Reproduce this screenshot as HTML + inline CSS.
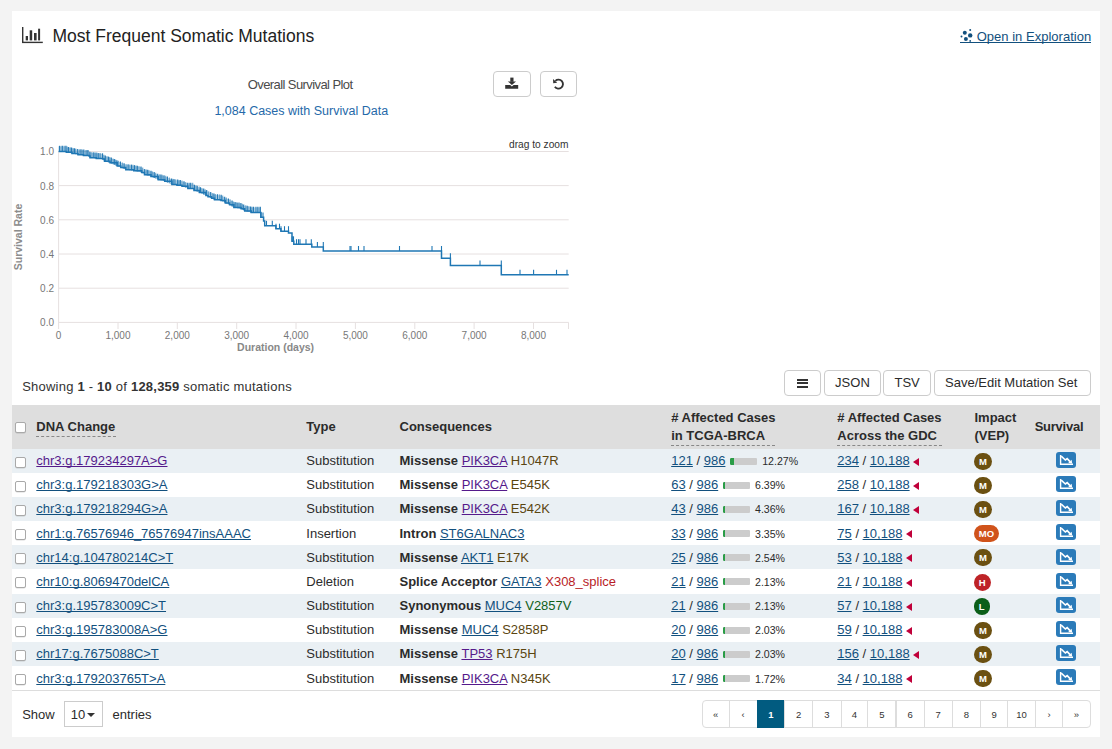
<!DOCTYPE html><html><head><meta charset="utf-8"><style>
*{margin:0;padding:0;box-sizing:border-box}
html,body{width:1112px;height:749px;overflow:hidden;background:#f3f3f3;font-family:"Liberation Sans",sans-serif;color:#2b2b2b}
.panel{position:absolute;left:12px;top:11px;width:1088px;height:726px;background:#fff}
.t{position:absolute;white-space:nowrap}
.b{font-weight:bold}
a,.lk{color:#12507e;text-decoration:underline;text-underline-offset:0.9px;text-decoration-thickness:1px;text-decoration-skip-ink:none}
.vis{color:#551a8b}
.btn{position:absolute;border:1px solid #ccc;border-radius:4px;background:#fff}
.row{position:absolute;left:12px;width:1088px}
.cb{position:absolute;width:11px;height:11px;border:1px solid #a9a9a9;border-radius:2px;background:#fff;box-shadow:0 0.5px 0.5px rgba(0,0,0,.15)}
.bar{position:absolute;width:27px;height:7px;border-radius:1px;background:#ccc;overflow:hidden}
.bar i{position:absolute;left:0;top:0;height:7px;background:#2a9d47;border-radius:1px 0 0 1px}
.pct{font-size:11px}
.badge{position:absolute;height:17px;border-radius:9px;color:#fff;font-weight:bold;font-size:9.5px;line-height:17px;text-align:center}
.sv{position:absolute;width:20px;height:16px;border-radius:3px;background:#2b7bb9}
.tri{position:absolute;width:0;height:0;border-top:4.3px solid transparent;border-bottom:4.3px solid transparent;border-right:6px solid #c0003a}
.pg{position:absolute;top:700px;height:28px;border:1px solid #ddd;font-size:9.5px;line-height:28px;text-align:center;color:#333;background:#fff}
</style></head><body>
<div class="panel"></div>
<svg style="position:absolute;left:21px;top:26px" width="24" height="18" viewBox="0 0 24 18">
<rect x="1" y="1" width="1.4" height="16" fill="#333"/>
<rect x="1" y="15.7" width="20.8" height="1.4" fill="#333"/>
<rect x="4.7" y="10" width="2.3" height="4.4" fill="#333"/>
<rect x="8.7" y="4.3" width="2.5" height="10.1" fill="#333"/>
<rect x="13" y="7" width="2.6" height="7.4" fill="#333"/>
<rect x="17.1" y="2.7" width="2" height="11.7" fill="#333"/>
</svg>
<div class="t " style="left:52.5px;top:28.39px;font-size:17.5px;line-height:17.5px;color:#222">Most Frequent Somatic Mutations</div>
<svg style="position:absolute;left:960px;top:28px" width="14" height="15" viewBox="0 0 14 15">
<circle cx="4.8" cy="4.8" r="2" fill="#12507e"/><circle cx="10.2" cy="1.9" r="1" fill="#12507e"/>
<circle cx="10.2" cy="7.4" r="2.2" fill="#12507e"/><circle cx="1.5" cy="8.4" r="1" fill="#12507e"/>
<circle cx="5.9" cy="11.1" r="2" fill="#12507e"/><circle cx="10.2" cy="12.9" r="0.9" fill="#12507e"/>
</svg>
<div style="position:absolute;left:960px;top:41.5px;width:130.5px;height:1px;background:#12507e"></div>
<div class="t " style="left:976.7px;top:30.00px;font-size:13px;line-height:13px;color:#12507e;letter-spacing:0.02px">Open in Exploration</div>
<div class="t " style="left:247.7px;top:77.70px;font-size:13px;line-height:13px;color:#4a4a4a;letter-spacing:-0.58px">Overall Survival Plot</div>
<div class="t " style="left:214.4px;top:104.62px;font-size:12.5px;line-height:12.5px;color:#2569a9">1,084 Cases with Survival Data</div>
<div class="btn" style="left:493px;top:71px;width:37.5px;height:26px"></div>
<div class="btn" style="left:540px;top:71px;width:37px;height:26px"></div>
<svg style="position:absolute;left:505px;top:77px" width="14" height="12" viewBox="0 0 14 12">
<rect x="5.3" y="0.6" width="3.2" height="4.2" fill="#333"/>
<path d="M2.8 4.4 H11 L6.9 8 Z" fill="#333"/>
<path d="M0.2 8 H5.2 L6.9 9.4 L8.6 8 H13.2 V11.8 H0.2 Z" fill="#333"/>
</svg>
<svg style="position:absolute;left:551px;top:76px" width="16" height="16" viewBox="0 0 16 16">
<g transform="translate(7.8 7.9) scale(0.9) translate(-8 -8)">
<path d="M4.2 4.6 A5 5 0 1 1 3.6 11.2" fill="none" stroke="#333" stroke-width="2.1"/>
<path d="M1.6 2.6 L6.2 6.8 L1.8 7.4 Z" fill="#333"/></g>
</svg>
<svg style="position:absolute;left:0;top:0" width="1112" height="749" viewBox="0 0 1112 749">
<line x1="59" x2="568.7" y1="151.5" y2="151.5" stroke="#e6e0e0" stroke-width="1"/>
<line x1="59" x2="568.7" y1="185.6" y2="185.6" stroke="#e6e0e0" stroke-width="1"/>
<line x1="59" x2="568.7" y1="219.8" y2="219.8" stroke="#e6e0e0" stroke-width="1"/>
<line x1="59" x2="568.7" y1="254.0" y2="254.0" stroke="#e6e0e0" stroke-width="1"/>
<line x1="59" x2="568.7" y1="288.2" y2="288.2" stroke="#e6e0e0" stroke-width="1"/>
<line x1="59" x2="568.7" y1="322.4" y2="322.4" stroke="#e6e0e0" stroke-width="1"/>
<line x1="58.6" x2="58.6" y1="151" y2="329" stroke="#e6e0e0" stroke-width="1"/>
<line x1="118.0" x2="118.0" y1="322.5" y2="329" stroke="#e6e0e0" stroke-width="1"/>
<line x1="177.3" x2="177.3" y1="322.5" y2="329" stroke="#e6e0e0" stroke-width="1"/>
<line x1="236.7" x2="236.7" y1="322.5" y2="329" stroke="#e6e0e0" stroke-width="1"/>
<line x1="296.0" x2="296.0" y1="322.5" y2="329" stroke="#e6e0e0" stroke-width="1"/>
<line x1="355.4" x2="355.4" y1="322.5" y2="329" stroke="#e6e0e0" stroke-width="1"/>
<line x1="414.8" x2="414.8" y1="322.5" y2="329" stroke="#e6e0e0" stroke-width="1"/>
<line x1="474.1" x2="474.1" y1="322.5" y2="329" stroke="#e6e0e0" stroke-width="1"/>
<line x1="533.5" x2="533.5" y1="322.5" y2="329" stroke="#e6e0e0" stroke-width="1"/>
<line x1="568.5" x2="568.5" y1="322.5" y2="329" stroke="#e6e0e0" stroke-width="1"/>
<polygon points="58.6,146.6 66.3,146.6 66.3,147.2 72.0,148.5 78.0,149.8 89.0,151.0 90.0,152.7 102.6,154.1 104.5,156.2 110.0,157.8 117.2,161.1 120.8,162.5 125.8,164.7 133.7,165.7 141.7,167.5 144.5,169.7 151.0,171.5 158.2,174.7 164.7,176.2 171.9,179.4 182.0,181.2 187.9,183.6 192.9,183.6 194.0,185.4 199.4,187.5 205.9,190.4 208.0,191.8 211.6,193.2 214.5,194.7 221.0,195.4 225.3,197.9 229.6,199.7 233.9,202.6 241.1,203.7 244.7,205.9 251.2,207.5 260.8,207.5 260.8,212.2 260.8,217.2 260.8,212.5 251.2,212.5 244.7,210.9 241.1,208.7 233.9,207.6 229.6,204.7 225.3,202.9 221.0,200.4 214.5,199.7 211.6,198.2 208.0,196.8 205.9,195.4 199.4,192.5 194.0,190.4 192.9,188.6 187.9,188.6 182.0,186.2 171.9,184.4 164.7,181.2 158.2,179.7 151.0,176.5 144.5,174.7 141.7,172.5 133.7,170.7 125.8,169.7 120.8,167.5 117.2,166.1 110.0,162.8 104.5,161.2 102.6,159.1 90.0,157.7 89.0,156.0 78.0,154.8 72.0,153.5 66.3,152.2 66.3,151.6 58.6,151.6" fill="#1f77b4" opacity="0.3"/>
<path d="M58.6 151.6 H66.3 V152.2 H72.00 V153.50 H78.00 V154.80 H83.50 V155.40 H89.00 V156.00 H90.00 V157.70 H96.30 V158.40 H102.60 V159.10 H104.50 V161.20 H110.00 V162.80 H117.20 V166.10 H120.80 V167.50 H125.80 V169.70 H133.70 V170.70 H141.70 V172.50 H144.50 V174.70 H151.00 V176.50 H158.20 V179.70 H164.70 V181.20 H171.90 V184.40 H176.95 V185.30 H182.00 V186.20 H187.90 V188.60 H192.9 H194.00 V190.40 H199.40 V192.50 H205.90 V195.40 H208.00 V196.80 H211.60 V198.20 H214.50 V199.70 H221.00 V200.40 H225.30 V202.90 H229.60 V204.70 H233.90 V207.60 H241.10 V208.70 H244.70 V210.90 H251.20 V212.50 H260.8 V217.2 H263.60 V217.60 V221.1 H264.7 V225.79999999999998 H275.9 V228.7 H280.9 V231.2 H288.5 V233.0 H292 V241.29999999999998 H293.8 V244.2 H311.8 V247.0 H323.3 V251.0 H441.5 V258.20000000000005 H450.4 V265.40000000000003 H501.3 V274.8 H568.7" fill="none" stroke="#1f77b4" stroke-width="1.5"/>
<line x1="59.5" x2="59.5" y1="145.8" y2="151.6" stroke="#1f77b4" stroke-width="1.2" opacity="0.95"/>
<line x1="61.2" x2="61.2" y1="145.8" y2="151.6" stroke="#1f77b4" stroke-width="1.2" opacity="0.55"/>
<line x1="62.7" x2="62.7" y1="145.8" y2="151.6" stroke="#1f77b4" stroke-width="1.2" opacity="0.95"/>
<line x1="64.7" x2="64.7" y1="145.8" y2="151.6" stroke="#1f77b4" stroke-width="1.2" opacity="0.55"/>
<line x1="66.0" x2="66.0" y1="145.8" y2="151.6" stroke="#1f77b4" stroke-width="1.2" opacity="0.95"/>
<line x1="67.3" x2="67.3" y1="146.6" y2="152.4" stroke="#1f77b4" stroke-width="1.2" opacity="0.55"/>
<line x1="68.6" x2="68.6" y1="146.9" y2="152.7" stroke="#1f77b4" stroke-width="1.2" opacity="0.95"/>
<line x1="70.3" x2="70.3" y1="147.3" y2="153.1" stroke="#1f77b4" stroke-width="1.2" opacity="0.55"/>
<line x1="71.6" x2="71.6" y1="147.6" y2="153.4" stroke="#1f77b4" stroke-width="1.2" opacity="0.95"/>
<line x1="73.1" x2="73.1" y1="147.9" y2="153.7" stroke="#1f77b4" stroke-width="1.2" opacity="0.55"/>
<line x1="74.4" x2="74.4" y1="148.2" y2="154.0" stroke="#1f77b4" stroke-width="1.2" opacity="0.95"/>
<line x1="75.7" x2="75.7" y1="148.5" y2="154.3" stroke="#1f77b4" stroke-width="1.2" opacity="0.55"/>
<line x1="77.7" x2="77.7" y1="148.9" y2="154.7" stroke="#1f77b4" stroke-width="1.2" opacity="0.95"/>
<line x1="79.7" x2="79.7" y1="149.2" y2="155.0" stroke="#1f77b4" stroke-width="1.2" opacity="0.55"/>
<line x1="81.0" x2="81.0" y1="149.3" y2="155.1" stroke="#1f77b4" stroke-width="1.2" opacity="0.95"/>
<line x1="82.5" x2="82.5" y1="149.5" y2="155.3" stroke="#1f77b4" stroke-width="1.2" opacity="0.55"/>
<line x1="83.8" x2="83.8" y1="149.6" y2="155.4" stroke="#1f77b4" stroke-width="1.2" opacity="0.95"/>
<line x1="85.8" x2="85.8" y1="149.9" y2="155.7" stroke="#1f77b4" stroke-width="1.2" opacity="0.55"/>
<line x1="87.1" x2="87.1" y1="150.0" y2="155.8" stroke="#1f77b4" stroke-width="1.2" opacity="0.95"/>
<line x1="88.4" x2="88.4" y1="150.1" y2="155.9" stroke="#1f77b4" stroke-width="1.2" opacity="0.55"/>
<line x1="89.9" x2="89.9" y1="151.7" y2="157.5" stroke="#1f77b4" stroke-width="1.2" opacity="0.95"/>
<line x1="91.2" x2="91.2" y1="152.0" y2="157.8" stroke="#1f77b4" stroke-width="1.2" opacity="0.55"/>
<line x1="93.2" x2="93.2" y1="152.3" y2="158.1" stroke="#1f77b4" stroke-width="1.2" opacity="0.95"/>
<line x1="94.5" x2="94.5" y1="152.4" y2="158.2" stroke="#1f77b4" stroke-width="1.2" opacity="0.55"/>
<line x1="96.0" x2="96.0" y1="152.6" y2="158.4" stroke="#1f77b4" stroke-width="1.2" opacity="0.95"/>
<line x1="97.3" x2="97.3" y1="152.7" y2="158.5" stroke="#1f77b4" stroke-width="1.2" opacity="0.55"/>
<line x1="98.8" x2="98.8" y1="152.9" y2="158.7" stroke="#1f77b4" stroke-width="1.2" opacity="0.95"/>
<line x1="100.5" x2="100.5" y1="153.1" y2="158.9" stroke="#1f77b4" stroke-width="1.2" opacity="0.55"/>
<line x1="102.5" x2="102.5" y1="153.3" y2="159.1" stroke="#1f77b4" stroke-width="1.2" opacity="0.95"/>
<line x1="104.0" x2="104.0" y1="154.8" y2="160.6" stroke="#1f77b4" stroke-width="1.2" opacity="0.55"/>
<line x1="105.3" x2="105.3" y1="155.6" y2="161.4" stroke="#1f77b4" stroke-width="1.2" opacity="0.95"/>
<line x1="107.0" x2="107.0" y1="156.1" y2="161.9" stroke="#1f77b4" stroke-width="1.2" opacity="0.55"/>
<line x1="108.5" x2="108.5" y1="156.6" y2="162.4" stroke="#1f77b4" stroke-width="1.2" opacity="0.95"/>
<line x1="109.8" x2="109.8" y1="156.9" y2="162.7" stroke="#1f77b4" stroke-width="1.2" opacity="0.55"/>
<line x1="111.3" x2="111.3" y1="157.6" y2="163.4" stroke="#1f77b4" stroke-width="1.2" opacity="0.95"/>
<line x1="113.0" x2="113.0" y1="158.4" y2="164.2" stroke="#1f77b4" stroke-width="1.2" opacity="0.55"/>
<line x1="114.3" x2="114.3" y1="159.0" y2="164.8" stroke="#1f77b4" stroke-width="1.2" opacity="0.95"/>
<line x1="115.6" x2="115.6" y1="159.6" y2="165.4" stroke="#1f77b4" stroke-width="1.2" opacity="0.55"/>
<line x1="116.9" x2="116.9" y1="160.2" y2="166.0" stroke="#1f77b4" stroke-width="1.2" opacity="0.95"/>
<line x1="118.4" x2="118.4" y1="160.8" y2="166.6" stroke="#1f77b4" stroke-width="1.2" opacity="0.55"/>
<line x1="120.4" x2="120.4" y1="161.5" y2="167.3" stroke="#1f77b4" stroke-width="1.2" opacity="0.95"/>
<line x1="122.4" x2="122.4" y1="162.4" y2="168.2" stroke="#1f77b4" stroke-width="1.2" opacity="0.55"/>
<line x1="124.1" x2="124.1" y1="163.2" y2="169.0" stroke="#1f77b4" stroke-width="1.2" opacity="0.95"/>
<line x1="126.1" x2="126.1" y1="163.9" y2="169.7" stroke="#1f77b4" stroke-width="1.2" opacity="0.55"/>
<line x1="128.1" x2="128.1" y1="164.2" y2="170.0" stroke="#1f77b4" stroke-width="1.2" opacity="0.95"/>
<line x1="129.8" x2="129.8" y1="164.4" y2="170.2" stroke="#1f77b4" stroke-width="1.2" opacity="0.55"/>
<line x1="131.5" x2="131.5" y1="164.6" y2="170.4" stroke="#1f77b4" stroke-width="1.2" opacity="0.95"/>
<line x1="133.0" x2="133.0" y1="164.8" y2="170.6" stroke="#1f77b4" stroke-width="1.2" opacity="0.55"/>
<line x1="134.5" x2="134.5" y1="165.1" y2="170.9" stroke="#1f77b4" stroke-width="1.2" opacity="0.95"/>
<line x1="136.0" x2="136.0" y1="165.4" y2="171.2" stroke="#1f77b4" stroke-width="1.2" opacity="0.55"/>
<line x1="137.3" x2="137.3" y1="165.7" y2="171.5" stroke="#1f77b4" stroke-width="1.2" opacity="0.95"/>
<line x1="139.0" x2="139.0" y1="166.1" y2="171.9" stroke="#1f77b4" stroke-width="1.2" opacity="0.55"/>
<line x1="141.0" x2="141.0" y1="166.5" y2="172.3" stroke="#1f77b4" stroke-width="1.2" opacity="0.95"/>
<line x1="142.7" x2="142.7" y1="167.5" y2="173.3" stroke="#1f77b4" stroke-width="1.2" opacity="0.55"/>
<line x1="144.7" x2="144.7" y1="169.0" y2="174.8" stroke="#1f77b4" stroke-width="1.2" opacity="0.95"/>
<line x1="146.4" x2="146.4" y1="169.4" y2="175.2" stroke="#1f77b4" stroke-width="1.2" opacity="0.55"/>
<line x1="147.7" x2="147.7" y1="169.8" y2="175.6" stroke="#1f77b4" stroke-width="1.2" opacity="0.95"/>
<line x1="149.0" x2="149.0" y1="170.1" y2="175.9" stroke="#1f77b4" stroke-width="1.2" opacity="0.55"/>
<line x1="151.0" x2="151.0" y1="170.7" y2="176.5" stroke="#1f77b4" stroke-width="1.2" opacity="0.95"/>
<line x1="152.5" x2="152.5" y1="171.4" y2="177.2" stroke="#1f77b4" stroke-width="1.2" opacity="0.55"/>
<line x1="154.2" x2="154.2" y1="172.1" y2="177.9" stroke="#1f77b4" stroke-width="1.2" opacity="0.95"/>
<line x1="155.7" x2="155.7" y1="172.8" y2="178.6" stroke="#1f77b4" stroke-width="1.2" opacity="0.55"/>
<line x1="157.7" x2="157.7" y1="173.7" y2="179.5" stroke="#1f77b4" stroke-width="1.2" opacity="0.95"/>
<line x1="159.7" x2="159.7" y1="174.2" y2="180.0" stroke="#1f77b4" stroke-width="1.2" opacity="0.55"/>
<line x1="161.0" x2="161.0" y1="174.5" y2="180.3" stroke="#1f77b4" stroke-width="1.2" opacity="0.95"/>
<line x1="162.3" x2="162.3" y1="174.8" y2="180.6" stroke="#1f77b4" stroke-width="1.2" opacity="0.55"/>
<line x1="164.0" x2="164.0" y1="175.2" y2="181.0" stroke="#1f77b4" stroke-width="1.2" opacity="0.95"/>
<line x1="165.7" x2="165.7" y1="175.8" y2="181.6" stroke="#1f77b4" stroke-width="1.2" opacity="0.55"/>
<line x1="167.4" x2="167.4" y1="176.6" y2="182.4" stroke="#1f77b4" stroke-width="1.2" opacity="0.95"/>
<line x1="169.4" x2="169.4" y1="177.5" y2="183.3" stroke="#1f77b4" stroke-width="1.2" opacity="0.55"/>
<line x1="171.4" x2="171.4" y1="178.4" y2="184.2" stroke="#1f77b4" stroke-width="1.2" opacity="0.95"/>
<line x1="172.7" x2="172.7" y1="178.7" y2="184.5" stroke="#1f77b4" stroke-width="1.2" opacity="0.55"/>
<line x1="174.0" x2="174.0" y1="179.0" y2="184.8" stroke="#1f77b4" stroke-width="1.2" opacity="0.95"/>
<line x1="175.7" x2="175.7" y1="179.3" y2="185.1" stroke="#1f77b4" stroke-width="1.2" opacity="0.55"/>
<line x1="177.7" x2="177.7" y1="179.6" y2="185.4" stroke="#1f77b4" stroke-width="1.2" opacity="0.95"/>
<line x1="179.0" x2="179.0" y1="179.9" y2="185.7" stroke="#1f77b4" stroke-width="1.2" opacity="0.55"/>
<line x1="180.3" x2="180.3" y1="180.1" y2="185.9" stroke="#1f77b4" stroke-width="1.2" opacity="0.95"/>
<line x1="182.0" x2="182.0" y1="180.4" y2="186.2" stroke="#1f77b4" stroke-width="1.2" opacity="0.55"/>
<line x1="184.0" x2="184.0" y1="181.2" y2="187.0" stroke="#1f77b4" stroke-width="1.2" opacity="0.95"/>
<line x1="185.7" x2="185.7" y1="181.9" y2="187.7" stroke="#1f77b4" stroke-width="1.2" opacity="0.55"/>
<line x1="187.7" x2="187.7" y1="182.7" y2="188.5" stroke="#1f77b4" stroke-width="1.2" opacity="0.95"/>
<line x1="189.4" x2="189.4" y1="182.8" y2="188.6" stroke="#1f77b4" stroke-width="1.2" opacity="0.55"/>
<line x1="190.7" x2="190.7" y1="182.8" y2="188.6" stroke="#1f77b4" stroke-width="1.2" opacity="0.95"/>
<line x1="192.7" x2="192.7" y1="182.8" y2="188.6" stroke="#1f77b4" stroke-width="1.2" opacity="0.55"/>
<line x1="194.4" x2="194.4" y1="184.8" y2="190.6" stroke="#1f77b4" stroke-width="1.2" opacity="0.95"/>
<line x1="195.9" x2="195.9" y1="185.3" y2="191.1" stroke="#1f77b4" stroke-width="1.2" opacity="0.55"/>
<line x1="197.2" x2="197.2" y1="185.8" y2="191.6" stroke="#1f77b4" stroke-width="1.2" opacity="0.95"/>
<line x1="199.2" x2="199.2" y1="186.6" y2="192.4" stroke="#1f77b4" stroke-width="1.2" opacity="0.55"/>
<line x1="200.5" x2="200.5" y1="187.2" y2="193.0" stroke="#1f77b4" stroke-width="1.2" opacity="0.95"/>
<line x1="202.0" x2="202.0" y1="187.9" y2="193.7" stroke="#1f77b4" stroke-width="1.2" opacity="0.55"/>
<line x1="203.7" x2="203.7" y1="188.6" y2="194.4" stroke="#1f77b4" stroke-width="1.2" opacity="0.95"/>
<line x1="205.2" x2="205.2" y1="189.3" y2="195.1" stroke="#1f77b4" stroke-width="1.2" opacity="0.55"/>
<line x1="206.7" x2="206.7" y1="190.1" y2="195.9" stroke="#1f77b4" stroke-width="1.2" opacity="0.95"/>
<line x1="208.7" x2="208.7" y1="191.3" y2="197.1" stroke="#1f77b4" stroke-width="1.2" opacity="0.55"/>
<line x1="210.7" x2="210.7" y1="192.0" y2="197.8" stroke="#1f77b4" stroke-width="1.2" opacity="0.95"/>
<line x1="212.7" x2="212.7" y1="193.0" y2="198.8" stroke="#1f77b4" stroke-width="1.2" opacity="0.55"/>
<line x1="214.0" x2="214.0" y1="193.6" y2="199.4" stroke="#1f77b4" stroke-width="1.2" opacity="0.95"/>
<line x1="215.5" x2="215.5" y1="194.0" y2="199.8" stroke="#1f77b4" stroke-width="1.2" opacity="0.55"/>
<line x1="217.5" x2="217.5" y1="194.2" y2="200.0" stroke="#1f77b4" stroke-width="1.2" opacity="0.95"/>
<line x1="219.5" x2="219.5" y1="194.4" y2="200.2" stroke="#1f77b4" stroke-width="1.2" opacity="0.55"/>
<line x1="221.2" x2="221.2" y1="194.7" y2="200.5" stroke="#1f77b4" stroke-width="1.2" opacity="0.95"/>
<line x1="222.7" x2="222.7" y1="195.6" y2="201.4" stroke="#1f77b4" stroke-width="1.2" opacity="0.55"/>
<line x1="224.7" x2="224.7" y1="196.8" y2="202.6" stroke="#1f77b4" stroke-width="1.2" opacity="0.95"/>
<line x1="226.4" x2="226.4" y1="197.6" y2="203.4" stroke="#1f77b4" stroke-width="1.2" opacity="0.55"/>
<line x1="228.4" x2="228.4" y1="198.4" y2="204.2" stroke="#1f77b4" stroke-width="1.2" opacity="0.95"/>
<line x1="230.1" x2="230.1" y1="199.2" y2="205.0" stroke="#1f77b4" stroke-width="1.2" opacity="0.55"/>
<line x1="232.1" x2="232.1" y1="200.6" y2="206.4" stroke="#1f77b4" stroke-width="1.2" opacity="0.95"/>
<line x1="233.6" x2="233.6" y1="201.6" y2="207.4" stroke="#1f77b4" stroke-width="1.2" opacity="0.55"/>
<line x1="235.1" x2="235.1" y1="202.0" y2="207.8" stroke="#1f77b4" stroke-width="1.2" opacity="0.95"/>
<line x1="236.4" x2="236.4" y1="202.2" y2="208.0" stroke="#1f77b4" stroke-width="1.2" opacity="0.55"/>
<line x1="237.9" x2="237.9" y1="202.4" y2="208.2" stroke="#1f77b4" stroke-width="1.2" opacity="0.95"/>
<line x1="239.4" x2="239.4" y1="202.6" y2="208.4" stroke="#1f77b4" stroke-width="1.2" opacity="0.55"/>
<line x1="240.9" x2="240.9" y1="202.9" y2="208.7" stroke="#1f77b4" stroke-width="1.2" opacity="0.95"/>
<line x1="242.4" x2="242.4" y1="203.7" y2="209.5" stroke="#1f77b4" stroke-width="1.2" opacity="0.55"/>
<line x1="243.7" x2="243.7" y1="204.5" y2="210.3" stroke="#1f77b4" stroke-width="1.2" opacity="0.95"/>
<line x1="245.7" x2="245.7" y1="205.3" y2="211.1" stroke="#1f77b4" stroke-width="1.2" opacity="0.55"/>
<line x1="247.2" x2="247.2" y1="205.7" y2="211.5" stroke="#1f77b4" stroke-width="1.2" opacity="0.95"/>
<line x1="248.9" x2="248.9" y1="206.1" y2="211.9" stroke="#1f77b4" stroke-width="1.2" opacity="0.55"/>
<line x1="250.6" x2="250.6" y1="206.6" y2="212.4" stroke="#1f77b4" stroke-width="1.2" opacity="0.95"/>
<line x1="251.9" x2="251.9" y1="206.7" y2="212.5" stroke="#1f77b4" stroke-width="1.2" opacity="0.55"/>
<line x1="253.4" x2="253.4" y1="206.7" y2="212.5" stroke="#1f77b4" stroke-width="1.2" opacity="0.95"/>
<line x1="255.4" x2="255.4" y1="206.7" y2="212.5" stroke="#1f77b4" stroke-width="1.2" opacity="0.55"/>
<line x1="257.1" x2="257.1" y1="206.7" y2="212.5" stroke="#1f77b4" stroke-width="1.2" opacity="0.95"/>
<line x1="258.8" x2="258.8" y1="206.7" y2="212.5" stroke="#1f77b4" stroke-width="1.2" opacity="0.55"/>
<line x1="260.3" x2="260.3" y1="206.7" y2="212.5" stroke="#1f77b4" stroke-width="1.2" opacity="0.95"/>
<line x1="261.1" x2="261.1" y1="212.2" y2="217.2" stroke="#1f77b4" stroke-width="1.1" opacity="1"/>
<line x1="263.0" x2="263.0" y1="212.5" y2="217.5" stroke="#1f77b4" stroke-width="1.1" opacity="1"/>
<line x1="266.5" x2="266.5" y1="220.8" y2="225.8" stroke="#1f77b4" stroke-width="1.1" opacity="1"/>
<line x1="272.3" x2="272.3" y1="220.8" y2="225.8" stroke="#1f77b4" stroke-width="1.1" opacity="1"/>
<line x1="276.0" x2="276.0" y1="223.7" y2="228.7" stroke="#1f77b4" stroke-width="1.1" opacity="1"/>
<line x1="279.5" x2="279.5" y1="223.7" y2="228.7" stroke="#1f77b4" stroke-width="1.1" opacity="1"/>
<line x1="281.0" x2="281.0" y1="226.2" y2="231.2" stroke="#1f77b4" stroke-width="1.1" opacity="1"/>
<line x1="284.5" x2="284.5" y1="226.2" y2="231.2" stroke="#1f77b4" stroke-width="1.1" opacity="1"/>
<line x1="288.5" x2="288.5" y1="226.2" y2="231.2" stroke="#1f77b4" stroke-width="1.1" opacity="1"/>
<line x1="292.2" x2="292.2" y1="236.3" y2="241.3" stroke="#1f77b4" stroke-width="1.1" opacity="1"/>
<line x1="293.5" x2="293.5" y1="236.3" y2="241.3" stroke="#1f77b4" stroke-width="1.1" opacity="1"/>
<line x1="296.5" x2="296.5" y1="239.2" y2="244.2" stroke="#1f77b4" stroke-width="1.1" opacity="1"/>
<line x1="298.5" x2="298.5" y1="239.2" y2="244.2" stroke="#1f77b4" stroke-width="1.1" opacity="1"/>
<line x1="300.0" x2="300.0" y1="239.2" y2="244.2" stroke="#1f77b4" stroke-width="1.1" opacity="1"/>
<line x1="306.0" x2="306.0" y1="239.2" y2="244.2" stroke="#1f77b4" stroke-width="1.1" opacity="1"/>
<line x1="311.3" x2="311.3" y1="239.2" y2="244.2" stroke="#1f77b4" stroke-width="1.1" opacity="1"/>
<line x1="317.4" x2="317.4" y1="242.0" y2="247.0" stroke="#1f77b4" stroke-width="1.1" opacity="1"/>
<line x1="323.3" x2="323.3" y1="242.0" y2="247.0" stroke="#1f77b4" stroke-width="1.1" opacity="1"/>
<line x1="350.0" x2="350.0" y1="246.0" y2="251.0" stroke="#1f77b4" stroke-width="1.1" opacity="1"/>
<line x1="351.0" x2="351.0" y1="246.0" y2="251.0" stroke="#1f77b4" stroke-width="1.1" opacity="1"/>
<line x1="358.5" x2="358.5" y1="246.0" y2="251.0" stroke="#1f77b4" stroke-width="1.1" opacity="1"/>
<line x1="364.0" x2="364.0" y1="246.0" y2="251.0" stroke="#1f77b4" stroke-width="1.1" opacity="1"/>
<line x1="399.5" x2="399.5" y1="246.0" y2="251.0" stroke="#1f77b4" stroke-width="1.1" opacity="1"/>
<line x1="432.0" x2="432.0" y1="246.0" y2="251.0" stroke="#1f77b4" stroke-width="1.1" opacity="1"/>
<line x1="441.5" x2="441.5" y1="246.0" y2="251.0" stroke="#1f77b4" stroke-width="1.1" opacity="1"/>
<line x1="450.4" x2="450.4" y1="253.2" y2="258.2" stroke="#1f77b4" stroke-width="1.1" opacity="1"/>
<line x1="480.0" x2="480.0" y1="260.4" y2="265.4" stroke="#1f77b4" stroke-width="1.1" opacity="1"/>
<line x1="501.3" x2="501.3" y1="260.4" y2="265.4" stroke="#1f77b4" stroke-width="1.1" opacity="1"/>
<line x1="520.0" x2="520.0" y1="269.8" y2="274.8" stroke="#1f77b4" stroke-width="1.1" opacity="1"/>
<line x1="533.6" x2="533.6" y1="269.8" y2="274.8" stroke="#1f77b4" stroke-width="1.1" opacity="1"/>
<line x1="556.5" x2="556.5" y1="269.8" y2="274.8" stroke="#1f77b4" stroke-width="1.1" opacity="1"/>
<line x1="567.0" x2="567.0" y1="269.8" y2="274.8" stroke="#1f77b4" stroke-width="1.1" opacity="1"/>
</svg>
<div class="t " style="left:0px;top:147.44px;font-size:10px;line-height:10px;width:54px;text-align:right;color:#777">1.0</div>
<div class="t " style="left:0px;top:181.53px;font-size:10px;line-height:10px;width:54px;text-align:right;color:#777">0.8</div>
<div class="t " style="left:0px;top:215.74px;font-size:10px;line-height:10px;width:54px;text-align:right;color:#777">0.6</div>
<div class="t " style="left:0px;top:249.93px;font-size:10px;line-height:10px;width:54px;text-align:right;color:#777">0.4</div>
<div class="t " style="left:0px;top:284.13px;font-size:10px;line-height:10px;width:54px;text-align:right;color:#777">0.2</div>
<div class="t " style="left:0px;top:318.33px;font-size:10px;line-height:10px;width:54px;text-align:right;color:#777">0.0</div>
<div class="t " style="left:38.6px;top:331.34px;font-size:10px;line-height:10px;width:40px;text-align:center;color:#777">0</div>
<div class="t " style="left:97.96000000000001px;top:331.34px;font-size:10px;line-height:10px;width:40px;text-align:center;color:#777">1,000</div>
<div class="t " style="left:157.32000000000002px;top:331.34px;font-size:10px;line-height:10px;width:40px;text-align:center;color:#777">2,000</div>
<div class="t " style="left:216.68px;top:331.34px;font-size:10px;line-height:10px;width:40px;text-align:center;color:#777">3,000</div>
<div class="t " style="left:276.04px;top:331.34px;font-size:10px;line-height:10px;width:40px;text-align:center;color:#777">4,000</div>
<div class="t " style="left:335.40000000000003px;top:331.34px;font-size:10px;line-height:10px;width:40px;text-align:center;color:#777">5,000</div>
<div class="t " style="left:394.76000000000005px;top:331.34px;font-size:10px;line-height:10px;width:40px;text-align:center;color:#777">6,000</div>
<div class="t " style="left:454.12000000000006px;top:331.34px;font-size:10px;line-height:10px;width:40px;text-align:center;color:#777">7,000</div>
<div class="t " style="left:513.48px;top:331.34px;font-size:10px;line-height:10px;width:40px;text-align:center;color:#777">8,000</div>
<div class="t b" style="left:237.1px;top:341.61px;font-size:10.5px;line-height:10.5px;color:#888">Duration (days)</div>
<div class="t b" style="left:-21.3px;top:231px;width:78px;text-align:center;font-size:10.5px;line-height:12px;color:#8c8c8c;transform:rotate(-90deg)">Survival Rate</div>
<div class="t " style="left:509px;top:139.77px;font-size:10.2px;line-height:10.2px;color:#333">drag to zoom</div>
<div class="t " style="left:22.2px;top:380.10px;font-size:13px;line-height:13px;color:#333;letter-spacing:0.22px">Showing <b>1</b> - <b>10</b> of <b>128,359</b> somatic mutations</div>
<div class="btn" style="left:784px;top:370px;width:36.5px;height:26px"></div>
<div style="position:absolute;left:797px;top:378.5px;width:11px;height:2px;background:#333"></div>
<div style="position:absolute;left:797px;top:382px;width:11px;height:2px;background:#333"></div>
<div style="position:absolute;left:797px;top:385.5px;width:11px;height:2px;background:#333"></div>
<div class="btn" style="left:823.5px;top:370px;width:57px;height:26px"></div>
<div class="t " style="left:835.1px;top:376.30px;font-size:13px;line-height:13px;">JSON</div>
<div class="btn" style="left:883.3px;top:370px;width:47.3px;height:26px"></div>
<div class="t " style="left:894.5px;top:376.30px;font-size:13px;line-height:13px;">TSV</div>
<div class="btn" style="left:933.7px;top:370px;width:157px;height:26px"></div>
<div class="t " style="left:945.1px;top:376.30px;font-size:13px;line-height:13px;">Save/Edit Mutation Set</div>
<div class="row" style="top:405px;height:43.5px;background:#dedede"></div>
<div class="cb" style="left:14.8px;top:421.5px"></div>
<div class="t b" style="left:36.3px;top:419.90px;font-size:13px;line-height:13px;">DNA Change</div>
<div style="position:absolute;left:36px;top:436px;width:80px;border-top:1px dashed #888"></div>
<div class="t b" style="left:306.3px;top:419.50px;font-size:13px;line-height:13px;">Type</div>
<div class="t b" style="left:399.5px;top:419.50px;font-size:13px;line-height:13px;">Consequences</div>
<div class="t b" style="left:671.2px;top:410.60px;font-size:13px;line-height:13px;"># Affected Cases</div>
<div class="t b" style="left:671.2px;top:428.60px;font-size:13px;line-height:13px;">in TCGA-BRCA</div>
<div style="position:absolute;left:671px;top:445px;width:104px;border-top:1px dashed #888"></div>
<div class="t b" style="left:837.3px;top:410.60px;font-size:13px;line-height:13px;"># Affected Cases</div>
<div class="t b" style="left:837.3px;top:428.60px;font-size:13px;line-height:13px;">Across the GDC</div>
<div style="position:absolute;left:837px;top:445px;width:105px;border-top:1px dashed #888"></div>
<div class="t b" style="left:974.5px;top:410.60px;font-size:13px;line-height:13px;">Impact</div>
<div class="t b" style="left:974.5px;top:428.60px;font-size:13px;line-height:13px;">(VEP)</div>
<div class="t b" style="left:1034.7px;top:420.00px;font-size:13px;line-height:13px;letter-spacing:-0.25px">Survival</div>
<div class="row" style="top:448.50px;height:24.17px;background:#eaf0f4"></div>
<div class="cb" style="left:14.8px;top:456.50px"></div>
<div class="t " style="left:36.3px;top:454.00px;font-size:13px;line-height:13px;"><span class="lk vis">chr3:g.179234297A&gt;G</span></div>
<div class="t " style="left:306.3px;top:454.00px;font-size:13px;line-height:13px;">Substitution</div>
<div class="t " style="left:399.5px;top:454.00px;font-size:13px;line-height:13px;"><b>Missense</b> <span class="lk vis">PIK3CA</span> <span style="color:#5a4510">H1047R</span></div>
<div class="t aff" style="left:671.2px;top:454.00px;font-size:13px;line-height:13px;"><span class="lk">121</span> / <span class="lk">986</span></div>
<div class="t gdc" style="left:837.3px;top:454.00px;font-size:13px;line-height:13px;"><span class="lk">234</span> / <span class="lk">10,188</span></div>
<div class="badge" style="left:974px;top:452.70px;width:18px;background:#6b5011">M</div>
<div class="sv" style="left:1056px;top:451.90px"><svg width="20" height="16" viewBox="0 0 20 16"><path d="M4.6 3 V12.3 H17" fill="none" stroke="#fff" stroke-width="1.4"/><path d="M5.2 4.2 L9.4 8 L11.2 6.6 L14 9.6" fill="none" stroke="#fff" stroke-width="1.6"/><path d="M16.2 11.6 L12.2 11 L15.6 7.8 Z" fill="#fff"/></svg></div>
<div class="bar" style="left:730.4px;top:457.60px"><i style="width:3.4px"></i></div>
<div class="t " style="left:762.22px;top:456.03px;font-size:10.6px;line-height:10.6px;">12.27%</div>
<div class="tri" style="left:913.2px;top:457.80px"></div>
<div class="row" style="top:472.67px;height:24.17px;background:#fff"></div>
<div class="cb" style="left:14.8px;top:480.67px"></div>
<div class="t " style="left:36.3px;top:478.17px;font-size:13px;line-height:13px;"><span class="lk">chr3:g.179218303G&gt;A</span></div>
<div class="t " style="left:306.3px;top:478.17px;font-size:13px;line-height:13px;">Substitution</div>
<div class="t " style="left:399.5px;top:478.17px;font-size:13px;line-height:13px;"><b>Missense</b> <span class="lk vis">PIK3CA</span> <span style="color:#5a4510">E545K</span></div>
<div class="t aff" style="left:671.2px;top:478.17px;font-size:13px;line-height:13px;"><span class="lk">63</span> / <span class="lk">986</span></div>
<div class="t gdc" style="left:837.3px;top:478.17px;font-size:13px;line-height:13px;"><span class="lk">258</span> / <span class="lk">10,188</span></div>
<div class="badge" style="left:974px;top:476.87px;width:18px;background:#6b5011">M</div>
<div class="sv" style="left:1056px;top:476.07px"><svg width="20" height="16" viewBox="0 0 20 16"><path d="M4.6 3 V12.3 H17" fill="none" stroke="#fff" stroke-width="1.4"/><path d="M5.2 4.2 L9.4 8 L11.2 6.6 L14 9.6" fill="none" stroke="#fff" stroke-width="1.6"/><path d="M16.2 11.6 L12.2 11 L15.6 7.8 Z" fill="#fff"/></svg></div>
<div class="bar" style="left:723.2px;top:481.77px"><i style="width:2.0px"></i></div>
<div class="t " style="left:754.99px;top:480.20px;font-size:10.6px;line-height:10.6px;">6.39%</div>
<div class="tri" style="left:913.2px;top:481.97px"></div>
<div class="row" style="top:496.84px;height:24.17px;background:#eaf0f4"></div>
<div class="cb" style="left:14.8px;top:504.84px"></div>
<div class="t " style="left:36.3px;top:502.34px;font-size:13px;line-height:13px;"><span class="lk">chr3:g.179218294G&gt;A</span></div>
<div class="t " style="left:306.3px;top:502.34px;font-size:13px;line-height:13px;">Substitution</div>
<div class="t " style="left:399.5px;top:502.34px;font-size:13px;line-height:13px;"><b>Missense</b> <span class="lk vis">PIK3CA</span> <span style="color:#5a4510">E542K</span></div>
<div class="t aff" style="left:671.2px;top:502.34px;font-size:13px;line-height:13px;"><span class="lk">43</span> / <span class="lk">986</span></div>
<div class="t gdc" style="left:837.3px;top:502.34px;font-size:13px;line-height:13px;"><span class="lk">167</span> / <span class="lk">10,188</span></div>
<div class="badge" style="left:974px;top:501.04px;width:18px;background:#6b5011">M</div>
<div class="sv" style="left:1056px;top:500.24px"><svg width="20" height="16" viewBox="0 0 20 16"><path d="M4.6 3 V12.3 H17" fill="none" stroke="#fff" stroke-width="1.4"/><path d="M5.2 4.2 L9.4 8 L11.2 6.6 L14 9.6" fill="none" stroke="#fff" stroke-width="1.6"/><path d="M16.2 11.6 L12.2 11 L15.6 7.8 Z" fill="#fff"/></svg></div>
<div class="bar" style="left:723.2px;top:505.94px"><i style="width:2.0px"></i></div>
<div class="t " style="left:754.99px;top:504.37px;font-size:10.6px;line-height:10.6px;">4.36%</div>
<div class="tri" style="left:913.2px;top:506.14px"></div>
<div class="row" style="top:521.01px;height:24.17px;background:#fff"></div>
<div class="cb" style="left:14.8px;top:529.01px"></div>
<div class="t " style="left:36.3px;top:526.51px;font-size:13px;line-height:13px;"><span class="lk">chr1:g.76576946_76576947insAAAC</span></div>
<div class="t " style="left:306.3px;top:526.51px;font-size:13px;line-height:13px;">Insertion</div>
<div class="t " style="left:399.5px;top:526.51px;font-size:13px;line-height:13px;"><b>Intron</b> <span class="lk">ST6GALNAC3</span></div>
<div class="t aff" style="left:671.2px;top:526.51px;font-size:13px;line-height:13px;"><span class="lk">33</span> / <span class="lk">986</span></div>
<div class="t gdc" style="left:837.3px;top:526.51px;font-size:13px;line-height:13px;"><span class="lk">75</span> / <span class="lk">10,188</span></div>
<div class="badge" style="left:974px;top:525.21px;width:25px;background:#d0531b">MO</div>
<div class="sv" style="left:1056px;top:524.41px"><svg width="20" height="16" viewBox="0 0 20 16"><path d="M4.6 3 V12.3 H17" fill="none" stroke="#fff" stroke-width="1.4"/><path d="M5.2 4.2 L9.4 8 L11.2 6.6 L14 9.6" fill="none" stroke="#fff" stroke-width="1.6"/><path d="M16.2 11.6 L12.2 11 L15.6 7.8 Z" fill="#fff"/></svg></div>
<div class="bar" style="left:723.2px;top:530.11px"><i style="width:2.0px"></i></div>
<div class="t " style="left:754.99px;top:528.54px;font-size:10.6px;line-height:10.6px;">3.35%</div>
<div class="tri" style="left:906.0px;top:530.31px"></div>
<div class="row" style="top:545.18px;height:24.17px;background:#eaf0f4"></div>
<div class="cb" style="left:14.8px;top:553.18px"></div>
<div class="t " style="left:36.3px;top:550.68px;font-size:13px;line-height:13px;"><span class="lk">chr14:g.104780214C&gt;T</span></div>
<div class="t " style="left:306.3px;top:550.68px;font-size:13px;line-height:13px;">Substitution</div>
<div class="t " style="left:399.5px;top:550.68px;font-size:13px;line-height:13px;"><b>Missense</b> <span class="lk">AKT1</span> <span style="color:#5a4510">E17K</span></div>
<div class="t aff" style="left:671.2px;top:550.68px;font-size:13px;line-height:13px;"><span class="lk">25</span> / <span class="lk">986</span></div>
<div class="t gdc" style="left:837.3px;top:550.68px;font-size:13px;line-height:13px;"><span class="lk">53</span> / <span class="lk">10,188</span></div>
<div class="badge" style="left:974px;top:549.38px;width:18px;background:#6b5011">M</div>
<div class="sv" style="left:1056px;top:548.58px"><svg width="20" height="16" viewBox="0 0 20 16"><path d="M4.6 3 V12.3 H17" fill="none" stroke="#fff" stroke-width="1.4"/><path d="M5.2 4.2 L9.4 8 L11.2 6.6 L14 9.6" fill="none" stroke="#fff" stroke-width="1.6"/><path d="M16.2 11.6 L12.2 11 L15.6 7.8 Z" fill="#fff"/></svg></div>
<div class="bar" style="left:723.2px;top:554.28px"><i style="width:2.0px"></i></div>
<div class="t " style="left:754.99px;top:552.71px;font-size:10.6px;line-height:10.6px;">2.54%</div>
<div class="tri" style="left:906.0px;top:554.48px"></div>
<div class="row" style="top:569.35px;height:24.17px;background:#fff"></div>
<div class="cb" style="left:14.8px;top:577.35px"></div>
<div class="t " style="left:36.3px;top:574.85px;font-size:13px;line-height:13px;"><span class="lk">chr10:g.8069470delCA</span></div>
<div class="t " style="left:306.3px;top:574.85px;font-size:13px;line-height:13px;">Deletion</div>
<div class="t " style="left:399.5px;top:574.85px;font-size:13px;line-height:13px;"><b>Splice Acceptor</b> <span class="lk">GATA3</span> <span style="color:#b81c26">X308_splice</span></div>
<div class="t aff" style="left:671.2px;top:574.85px;font-size:13px;line-height:13px;"><span class="lk">21</span> / <span class="lk">986</span></div>
<div class="t gdc" style="left:837.3px;top:574.85px;font-size:13px;line-height:13px;"><span class="lk">21</span> / <span class="lk">10,188</span></div>
<div class="badge" style="left:974px;top:573.55px;width:16.5px;background:#be2327">H</div>
<div class="sv" style="left:1056px;top:572.75px"><svg width="20" height="16" viewBox="0 0 20 16"><path d="M4.6 3 V12.3 H17" fill="none" stroke="#fff" stroke-width="1.4"/><path d="M5.2 4.2 L9.4 8 L11.2 6.6 L14 9.6" fill="none" stroke="#fff" stroke-width="1.6"/><path d="M16.2 11.6 L12.2 11 L15.6 7.8 Z" fill="#fff"/></svg></div>
<div class="bar" style="left:723.2px;top:578.45px"><i style="width:2.0px"></i></div>
<div class="t " style="left:754.99px;top:576.88px;font-size:10.6px;line-height:10.6px;">2.13%</div>
<div class="tri" style="left:906.0px;top:578.65px"></div>
<div class="row" style="top:593.52px;height:24.17px;background:#eaf0f4"></div>
<div class="cb" style="left:14.8px;top:601.52px"></div>
<div class="t " style="left:36.3px;top:599.02px;font-size:13px;line-height:13px;"><span class="lk">chr3:g.195783009C&gt;T</span></div>
<div class="t " style="left:306.3px;top:599.02px;font-size:13px;line-height:13px;">Substitution</div>
<div class="t " style="left:399.5px;top:599.02px;font-size:13px;line-height:13px;"><b>Synonymous</b> <span class="lk">MUC4</span> <span style="color:#0f5f1a">V2857V</span></div>
<div class="t aff" style="left:671.2px;top:599.02px;font-size:13px;line-height:13px;"><span class="lk">21</span> / <span class="lk">986</span></div>
<div class="t gdc" style="left:837.3px;top:599.02px;font-size:13px;line-height:13px;"><span class="lk">57</span> / <span class="lk">10,188</span></div>
<div class="badge" style="left:974px;top:597.72px;width:15.5px;background:#0b5e18">L</div>
<div class="sv" style="left:1056px;top:596.92px"><svg width="20" height="16" viewBox="0 0 20 16"><path d="M4.6 3 V12.3 H17" fill="none" stroke="#fff" stroke-width="1.4"/><path d="M5.2 4.2 L9.4 8 L11.2 6.6 L14 9.6" fill="none" stroke="#fff" stroke-width="1.6"/><path d="M16.2 11.6 L12.2 11 L15.6 7.8 Z" fill="#fff"/></svg></div>
<div class="bar" style="left:723.2px;top:602.62px"><i style="width:2.0px"></i></div>
<div class="t " style="left:754.99px;top:601.05px;font-size:10.6px;line-height:10.6px;">2.13%</div>
<div class="tri" style="left:906.0px;top:602.82px"></div>
<div class="row" style="top:617.69px;height:24.17px;background:#fff"></div>
<div class="cb" style="left:14.8px;top:625.69px"></div>
<div class="t " style="left:36.3px;top:623.19px;font-size:13px;line-height:13px;"><span class="lk">chr3:g.195783008A&gt;G</span></div>
<div class="t " style="left:306.3px;top:623.19px;font-size:13px;line-height:13px;">Substitution</div>
<div class="t " style="left:399.5px;top:623.19px;font-size:13px;line-height:13px;"><b>Missense</b> <span class="lk">MUC4</span> <span style="color:#5a4510">S2858P</span></div>
<div class="t aff" style="left:671.2px;top:623.19px;font-size:13px;line-height:13px;"><span class="lk">20</span> / <span class="lk">986</span></div>
<div class="t gdc" style="left:837.3px;top:623.19px;font-size:13px;line-height:13px;"><span class="lk">59</span> / <span class="lk">10,188</span></div>
<div class="badge" style="left:974px;top:621.89px;width:18px;background:#6b5011">M</div>
<div class="sv" style="left:1056px;top:621.09px"><svg width="20" height="16" viewBox="0 0 20 16"><path d="M4.6 3 V12.3 H17" fill="none" stroke="#fff" stroke-width="1.4"/><path d="M5.2 4.2 L9.4 8 L11.2 6.6 L14 9.6" fill="none" stroke="#fff" stroke-width="1.6"/><path d="M16.2 11.6 L12.2 11 L15.6 7.8 Z" fill="#fff"/></svg></div>
<div class="bar" style="left:723.2px;top:626.79px"><i style="width:2.0px"></i></div>
<div class="t " style="left:754.99px;top:625.22px;font-size:10.6px;line-height:10.6px;">2.03%</div>
<div class="tri" style="left:906.0px;top:626.99px"></div>
<div class="row" style="top:641.86px;height:24.17px;background:#eaf0f4"></div>
<div class="cb" style="left:14.8px;top:649.86px"></div>
<div class="t " style="left:36.3px;top:647.36px;font-size:13px;line-height:13px;"><span class="lk">chr17:g.7675088C&gt;T</span></div>
<div class="t " style="left:306.3px;top:647.36px;font-size:13px;line-height:13px;">Substitution</div>
<div class="t " style="left:399.5px;top:647.36px;font-size:13px;line-height:13px;"><b>Missense</b> <span class="lk vis">TP53</span> <span style="color:#5a4510">R175H</span></div>
<div class="t aff" style="left:671.2px;top:647.36px;font-size:13px;line-height:13px;"><span class="lk">20</span> / <span class="lk">986</span></div>
<div class="t gdc" style="left:837.3px;top:647.36px;font-size:13px;line-height:13px;"><span class="lk">156</span> / <span class="lk">10,188</span></div>
<div class="badge" style="left:974px;top:646.06px;width:18px;background:#6b5011">M</div>
<div class="sv" style="left:1056px;top:645.26px"><svg width="20" height="16" viewBox="0 0 20 16"><path d="M4.6 3 V12.3 H17" fill="none" stroke="#fff" stroke-width="1.4"/><path d="M5.2 4.2 L9.4 8 L11.2 6.6 L14 9.6" fill="none" stroke="#fff" stroke-width="1.6"/><path d="M16.2 11.6 L12.2 11 L15.6 7.8 Z" fill="#fff"/></svg></div>
<div class="bar" style="left:723.2px;top:650.96px"><i style="width:2.0px"></i></div>
<div class="t " style="left:754.99px;top:649.39px;font-size:10.6px;line-height:10.6px;">2.03%</div>
<div class="tri" style="left:913.2px;top:651.16px"></div>
<div class="row" style="top:666.03px;height:24.17px;background:#fff"></div>
<div class="cb" style="left:14.8px;top:674.03px"></div>
<div class="t " style="left:36.3px;top:671.53px;font-size:13px;line-height:13px;"><span class="lk">chr3:g.179203765T&gt;A</span></div>
<div class="t " style="left:306.3px;top:671.53px;font-size:13px;line-height:13px;">Substitution</div>
<div class="t " style="left:399.5px;top:671.53px;font-size:13px;line-height:13px;"><b>Missense</b> <span class="lk vis">PIK3CA</span> <span style="color:#5a4510">N345K</span></div>
<div class="t aff" style="left:671.2px;top:671.53px;font-size:13px;line-height:13px;"><span class="lk">17</span> / <span class="lk">986</span></div>
<div class="t gdc" style="left:837.3px;top:671.53px;font-size:13px;line-height:13px;"><span class="lk">34</span> / <span class="lk">10,188</span></div>
<div class="badge" style="left:974px;top:670.23px;width:18px;background:#6b5011">M</div>
<div class="sv" style="left:1056px;top:669.43px"><svg width="20" height="16" viewBox="0 0 20 16"><path d="M4.6 3 V12.3 H17" fill="none" stroke="#fff" stroke-width="1.4"/><path d="M5.2 4.2 L9.4 8 L11.2 6.6 L14 9.6" fill="none" stroke="#fff" stroke-width="1.6"/><path d="M16.2 11.6 L12.2 11 L15.6 7.8 Z" fill="#fff"/></svg></div>
<div class="bar" style="left:723.2px;top:675.13px"><i style="width:2.0px"></i></div>
<div class="t " style="left:754.99px;top:673.56px;font-size:10.6px;line-height:10.6px;">1.72%</div>
<div class="tri" style="left:906.0px;top:675.33px"></div>
<div style="position:absolute;left:12px;top:690px;width:1088px;height:1px;background:#ddd"></div>
<div class="t " style="left:22.2px;top:707.50px;font-size:13px;line-height:13px;">Show</div>
<div style="position:absolute;left:64.3px;top:701px;width:38.5px;height:25.6px;border:1px solid #ccc;background:#fff"></div>
<div class="t " style="left:70.8px;top:707.50px;font-size:13px;line-height:13px;">10</div>
<div class="t" style="left:87.4px;top:712.9px;width:0;height:0;border-left:4px solid transparent;border-right:4px solid transparent;border-top:4px solid #333"></div>
<div class="t " style="left:112.5px;top:707.50px;font-size:13px;line-height:13px;">entries</div>
<div class="pg" style="left:701.5px;width:28.1px;border-radius:4px 0 0 4px;">&laquo;</div>
<div class="pg" style="left:728.6px;width:29.2px;">&lsaquo;</div>
<div class="pg" style="left:756.8px;width:28.2px;background:#015b80;border-color:#015b80;color:#fff;font-weight:bold;">1</div>
<div class="pg" style="left:784.0px;width:29.4px;">2</div>
<div class="pg" style="left:812.4px;width:29.2px;">3</div>
<div class="pg" style="left:840.6px;width:27.8px;">4</div>
<div class="pg" style="left:867.4px;width:29.1px;">5</div>
<div class="pg" style="left:895.5px;width:29.1px;">6</div>
<div class="pg" style="left:923.6px;width:29.2px;">7</div>
<div class="pg" style="left:951.8px;width:29.0px;">8</div>
<div class="pg" style="left:979.8px;width:28.6px;">9</div>
<div class="pg" style="left:1007.4px;width:28.3px;">10</div>
<div class="pg" style="left:1034.7px;width:28.7px;">&rsaquo;</div>
<div class="pg" style="left:1062.4px;width:28.2px;border-radius:0 4px 4px 0;">&raquo;</div>
</body></html>
